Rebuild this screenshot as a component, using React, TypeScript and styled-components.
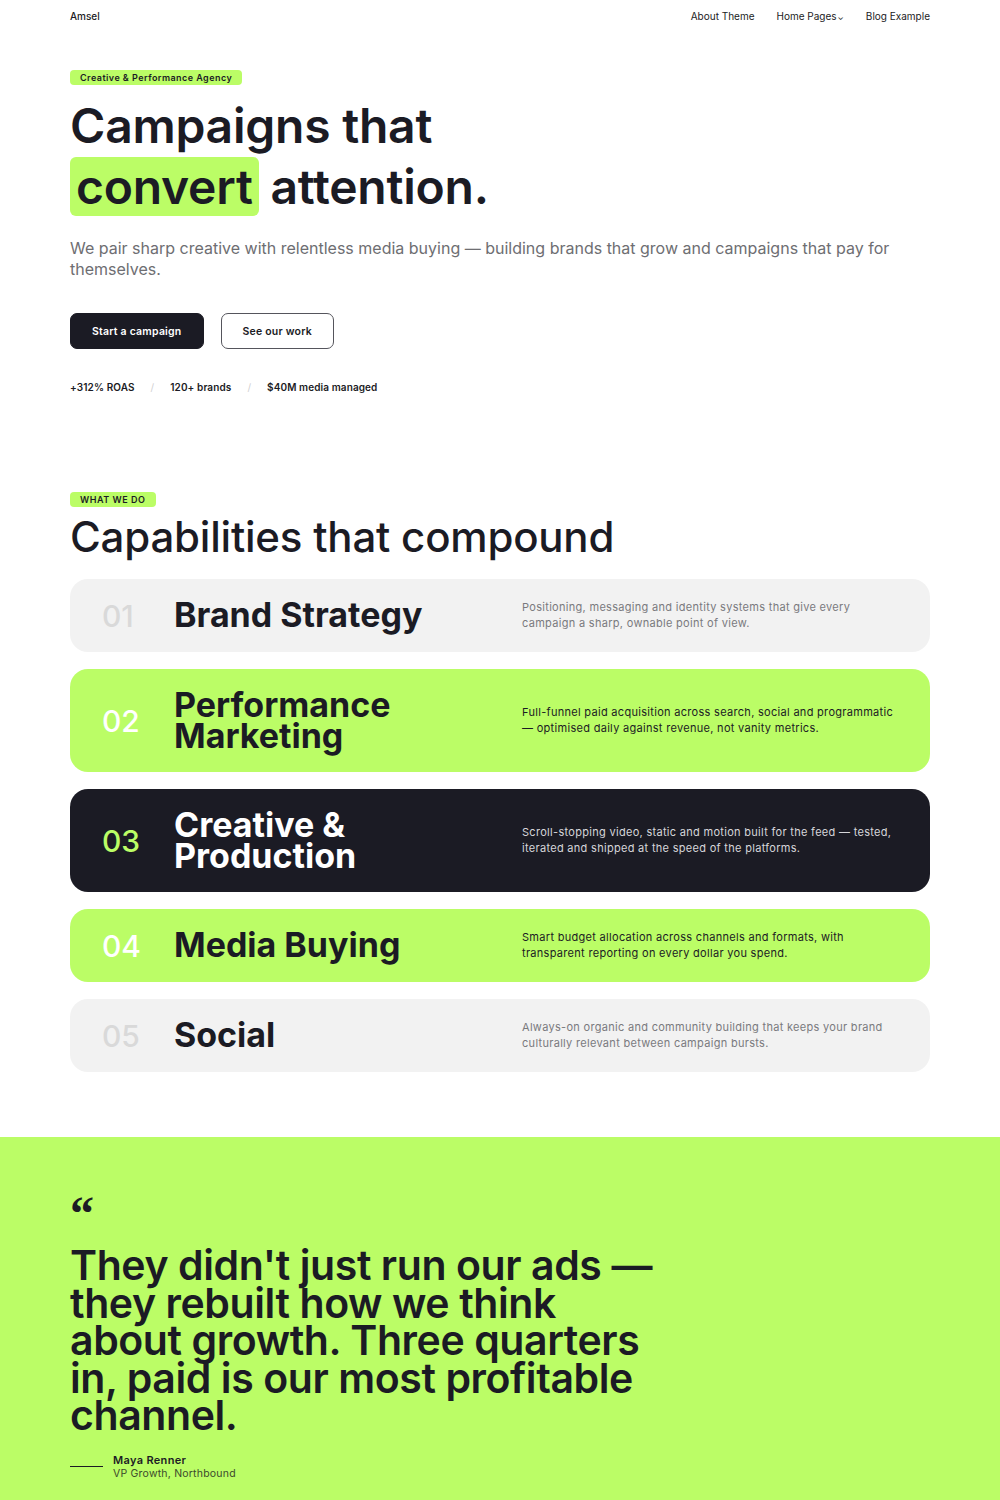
import React from 'react';
import styled, { createGlobalStyle } from 'styled-components';

const LIME = '#bbfd66';
const INK = '#1b1b24';

const GlobalStyle = createGlobalStyle`
  body {
    margin: 0;
    background: #fff;
    font-family: Inter, "Noto Sans", sans-serif;
    color: ${INK};
  }
  * { box-sizing: border-box; }
`;

interface Service {
  num: string;
  title: string;
  desc: string;
  tone: 'light' | 'lime' | 'dark';
}

const services: Service[] = [
  {
    num: '01',
    title: 'Brand Strategy',
    desc: 'Positioning, messaging and identity systems that give every campaign a sharp, ownable point of view.',
    tone: 'light',
  },
  {
    num: '02',
    title: 'Performance Marketing',
    desc: 'Full-funnel paid acquisition across search, social and programmatic — optimised daily against revenue, not vanity metrics.',
    tone: 'lime',
  },
  {
    num: '03',
    title: 'Creative & Production',
    desc: 'Scroll-stopping video, static and motion built for the feed — tested, iterated and shipped at the speed of the platforms.',
    tone: 'dark',
  },
  {
    num: '04',
    title: 'Media Buying',
    desc: 'Smart budget allocation across channels and formats, with transparent reporting on every dollar you spend.',
    tone: 'lime',
  },
  {
    num: '05',
    title: 'Social',
    desc: 'Always-on organic and community building that keeps your brand culturally relevant between campaign bursts.',
    tone: 'light',
  },
];

const App = () => {
  return (
    <>
      <GlobalStyle />
      <Nav>
        <Logo>Amsel</Logo>
        <NavLinks>
          <NavLink>About Theme</NavLink>
          <NavLink>
            Home Pages<Caret>⌄</Caret>
          </NavLink>
          <NavLink>Blog Example</NavLink>
        </NavLinks>
      </Nav>

      <Hero>
        <Badge>Creative &amp; Performance Agency</Badge>
        <HeroTitle>
          Campaigns that
          <br />
          <Mark>convert</Mark> attention.
        </HeroTitle>
        <Lead>
          We pair sharp creative with relentless media buying — building brands that grow and campaigns that pay for
          themselves.
        </Lead>
        <Actions>
          <Button $primary>Start a campaign</Button>
          <Button>See our work</Button>
        </Actions>
        <Stats>
          <span>+312% ROAS</span>
          <Sep>/</Sep>
          <span>120+ brands</span>
          <Sep>/</Sep>
          <span>$40M media managed</span>
        </Stats>
      </Hero>

      <Capabilities>
        <Badge $caps>What we do</Badge>
        <SectionTitle>Capabilities that compound</SectionTitle>
        <CardList>
          {services.map((s) => (
            <Card key={s.num} $tone={s.tone}>
              <Num $tone={s.tone}>{s.num}</Num>
              <CardTitle $tone={s.tone}>{s.title}</CardTitle>
              <CardDesc $tone={s.tone}>{s.desc}</CardDesc>
            </Card>
          ))}
        </CardList>
      </Capabilities>

      <Quote>
        <QuoteInner>
          <QuoteMark>“</QuoteMark>
          <QuoteText>
            They didn't just run our ads — they rebuilt how we think about growth. Three quarters in, paid is our most
            profitable channel.
          </QuoteText>
          <Author>
            <Rule />
            <div>
              <AuthorName>Maya Renner</AuthorName>
              <AuthorRole>VP Growth, Northbound</AuthorRole>
            </div>
          </Author>
        </QuoteInner>
      </Quote>
    </>
  );
};

export default App;

const Nav = styled.header`
  display: flex;
  justify-content: space-between;
  align-items: center;
  width: 860px;
  margin: 0 auto;
  height: 32px;
  font-size: 10px;
`;

const Logo = styled.div`
  font-weight: 500;
`;

const NavLinks = styled.nav`
  display: flex;
  gap: 22px;
`;

const NavLink = styled.a`
  color: ${INK};
  font-size: 10px;
`;

const Caret = styled.span`
  font-size: 8px;
  margin-left: 1px;
`;

const Hero = styled.section`
  width: 860px;
  margin: 0 auto;
  padding-top: 38px;
`;

const Badge = styled.div<{ $caps?: boolean }>`
  display: block;
  width: fit-content;
  background: ${LIME};
  border-radius: 4px;
  padding: 0 10px;
  font-size: 9px;
  font-weight: 600;
  letter-spacing: ${(p) => (p.$caps ? '0.06em' : '0.05em')};
  text-transform: ${(p) => (p.$caps ? 'uppercase' : 'none')};
  line-height: 15px;
`;

const HeroTitle = styled.h1`
  margin: 10px 0 0;
  font-size: 48px;
  font-weight: 600;
  letter-spacing: -0.005em;
  line-height: 61px;
`;

const Mark = styled.span`
  background: ${LIME};
  border-radius: 6px;
  padding: 0 6px;
`;

const Lead = styled.p`
  margin: 21px 0 0;
  font-size: 16px;
  line-height: 21px;
  color: #6e6e72;
`;

const Actions = styled.div`
  display: flex;
  gap: 17px;
  margin-top: 33px;
`;

const Button = styled.button<{ $primary?: boolean }>`
  height: 36px;
  padding: 0 21px;
  border-radius: 7px;
  font-family: inherit;
  font-size: 10.5px;
  font-weight: 600;
  letter-spacing: 0.02em;
  background: ${(p) => (p.$primary ? INK : '#fff')};
  color: ${(p) => (p.$primary ? '#fff' : INK)};
  border: 1px solid ${(p) => (p.$primary ? INK : '#55555c')};
`;

const Stats = styled.div`
  display: flex;
  align-items: center;
  gap: 16px;
  margin-top: 32px;
  font-size: 10px;
  font-weight: 600;
  letter-spacing: 0.01em;
  line-height: 12px;
`;

const Sep = styled.span`
  color: #d0d0d0;
  font-weight: 400;
`;

const Capabilities = styled.section`
  width: 860px;
  margin: 0 auto;
  padding-top: 99px;
`;

const SectionTitle = styled.h2`
  margin: 6px 0 0;
  font-size: 42px;
  font-weight: 500;
  letter-spacing: -0.005em;
  line-height: 48px;
`;

const CardList = styled.div`
  display: flex;
  flex-direction: column;
  gap: 17px;
  margin-top: 18px;
`;

const toneBg = { light: '#f2f2f2', lime: LIME, dark: INK };

const Card = styled.div<{ $tone: Service['tone'] }>`
  display: grid;
  grid-template-columns: 72px 348px 1fr;
  align-items: center;
  min-height: 73px;
  padding: 21px 32px;
  border-radius: 18px;
  background: ${(p) => toneBg[p.$tone]};
`;

const Num = styled.div<{ $tone: Service['tone'] }>`
  font-size: 30px;
  font-weight: 500;
  line-height: 30px;
  color: ${(p) => (p.$tone === 'light' ? '#d9d9d9' : p.$tone === 'lime' ? '#fff' : LIME)};
`;

const CardTitle = styled.div<{ $tone: Service['tone'] }>`
  max-width: 240px;
  font-size: 34px;
  font-weight: 700;
  line-height: 30.5px;
  color: ${(p) => (p.$tone === 'dark' ? '#fff' : INK)};
  white-space: ${(p) => (p.$tone === 'light' ? 'nowrap' : 'normal')};
`;

const CardDesc = styled.p<{ $tone: Service['tone'] }>`
  margin: 0;
  font-size: 11px;
  letter-spacing: 0.3px;
  line-height: 15.5px;
  max-width: 376px;
  color: ${(p) => (p.$tone === 'light' ? '#7a7a7e' : p.$tone === 'lime' ? INK : '#d6d6da')};
`;

const Quote = styled.section`
  margin-top: 65px;
  background: ${LIME};
  padding: 50px 0 20px;
`;

const QuoteInner = styled.div`
  width: 860px;
  margin: 0 auto;
`;

const QuoteMark = styled.div`
  font-family: "Liberation Serif", serif;
  font-size: 48px;
  font-weight: 700;
  line-height: 53px;
  height: 53px;
`;

const QuoteText = styled.blockquote`
  margin: 7px 0 0;
  max-width: 600px;
  font-size: 41px;
  font-weight: 600;
  letter-spacing: -0.01em;
  line-height: 37.5px;
`;

const Author = styled.div`
  display: flex;
  align-items: center;
  gap: 10px;
  margin-top: 18px;
`;

const Rule = styled.div`
  width: 33px;
  height: 1px;
  background: ${INK};
`;

const AuthorName = styled.div`
  font-size: 11px;
  font-weight: 600;
  letter-spacing: 0.03em;
  line-height: 14px;
`;

const AuthorRole = styled.div`
  font-size: 10.5px;
  letter-spacing: 0.02em;
  line-height: 14px;
  color: #3c4a2c;
`;
